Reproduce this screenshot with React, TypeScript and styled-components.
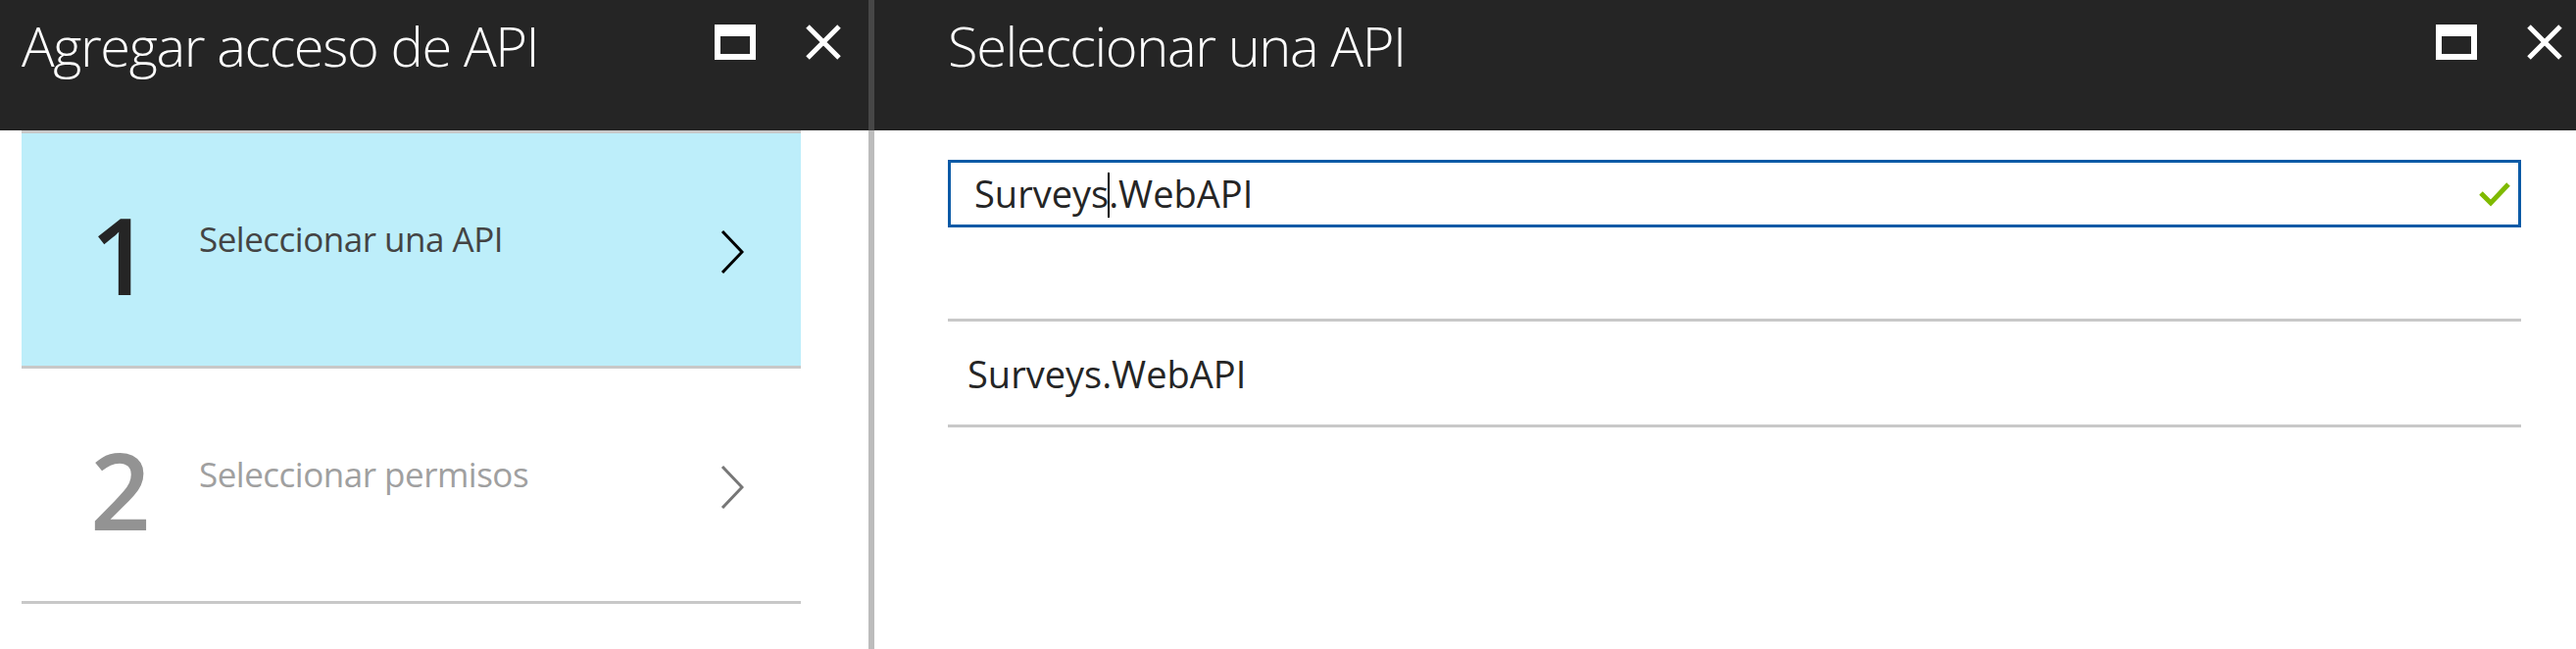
import React from "react"
import styled, { createGlobalStyle, css } from "styled-components"

const GlobalStyles = createGlobalStyle`
    *,
    *::before,
    *::after {
        margin: 0;
        padding: 0;
        box-sizing: border-box;
    }

    html, body, #root {
        height: 100%;
    }

    body {
        background-color: #ffffff;
        font-family: "Open Sans", "Noto Sans", sans-serif;
        overflow: hidden;
    }
`

const colors = {
    header: "#252525",
    dividerDark: "#474747",
    dividerLight: "#bcbcbc",
    rule: "#c8c8c8",
    selected: "#bdeefa",
    active: "#252525",
    inactive: "#939393",
    blue: "#0b5aa6",
    green: "#7fba00",
}

const Page = styled.div`
    display: flex;
    height: 662px;
    width: 2628px;
`

const Panel = styled.section<{ $width?: number }>`
    display: flex;
    flex-direction: column;
    ${props => props.$width ? css`width: ${props.$width}px;` : css`flex: 1;`}
`

const Header = styled.header<{ $divider?: boolean; $padLeft: number; $padRight: number }>`
    display: flex;
    align-items: flex-start;
    height: 133px;
    background-color: ${colors.header};
    padding: 14px ${props => props.$padRight}px 0 ${props => props.$padLeft}px;
    ${props => props.$divider && css`border-left: 6px solid ${colors.dividerDark};`}
`

const Title = styled.h1`
    flex: 1;
    color: #ffffff;
    font-family: "Open Sans", sans-serif;
    font-weight: 300;
    font-size: 56px;
    line-height: 64px;
    letter-spacing: -1.4px;
    white-space: nowrap;
`

const IconButton = styled.button`
    display: flex;
    align-items: center;
    justify-content: center;
    background: none;
    border: none;
    margin-top: 11px;
    height: 36px;
`

const Maximize = styled.span`
    display: block;
    width: 42px;
    height: 36px;
    border: 6px solid #ffffff;
    border-top-width: 12px;
`

const Body = styled.div<{ $divider?: boolean; $padLeft: number; $padRight: number }>`
    flex: 1;
    padding: 0 ${props => props.$padRight}px 0 ${props => props.$padLeft}px;
    ${props => props.$divider && css`border-left: 6px solid ${colors.dividerLight};`}
`

const StepList = styled.ul`
    list-style: none;
    border-top: 3px solid ${colors.rule};
`

const Step = styled.li<{ $selected?: boolean }>`
    display: flex;
    align-items: center;
    height: 240px;
    border-bottom: 3px solid ${colors.rule};
    background-color: ${props => props.$selected ? colors.selected : "transparent"};
    padding: 0 58px 0 0;
`

const StepNumber = styled.div<{ $active?: boolean }>`
    width: 181px;
    padding-left: 70px;
    margin-top: 10px;
    font-family: "Open Sans", sans-serif;
    font-size: 108px;
    line-height: 112px;
    font-weight: 600;
    color: ${props => props.$active ? colors.active : colors.inactive};
`

const StepLabel = styled.div<{ $active?: boolean }>`
    flex: 1;
    margin-top: -22px;
    font-family: "Open Sans", sans-serif;
    font-size: 35px;
    line-height: 44px;
    letter-spacing: -0.5px;
    color: ${props => props.$active ? "#444444" : "#a0a0a0"};
`

const Chevron = styled.svg`
    display: block;
    margin-top: 4px;
`

const SearchBox = styled.div`
    display: flex;
    align-items: center;
    margin-top: 30px;
    height: 69px;
    border: 3px solid ${colors.blue};
    padding: 0 8px 0 24px;
`

const SearchText = styled.div`
    flex: 1;
    font-family: "Open Sans", sans-serif;
    font-size: 38px;
    line-height: 48px;
    color: #252525;
    white-space: nowrap;
`

const Caret = styled.span`
    display: inline-block;
    width: 2px;
    height: 46px;
    margin: 0 -1px;
    vertical-align: -10px;
    background-color: #000000;
`

const Results = styled.ul`
    list-style: none;
    margin-top: 93px;
    border-top: 3px solid ${colors.rule};
`

const Result = styled.li`
    display: flex;
    align-items: center;
    height: 108px;
    padding-left: 20px;
    border-bottom: 3px solid ${colors.rule};
    font-family: "Open Sans", sans-serif;
    font-size: 38px;
    color: #252525;
`

const CloseIcon = () => (
    <svg width="36" height="36" viewBox="0 0 36 36">
        <path d="M2 2 L34 34 M34 2 L2 34" stroke="#ffffff" strokeWidth="5" fill="none" />
    </svg>
)

const HeaderIcons = styled.div`
    display: flex;
    gap: 51px;
    align-items: center;
`

const ChevronIcon = ({ color }: { color: string }) => (
    <Chevron width="24" height="44" viewBox="0 0 24 44">
        <polyline points="2,1 22,22 2,43" stroke={color} strokeWidth="3" fill="none" />
    </Chevron>
)

const steps = [
    { n: "1", label: "Seleccionar una API", active: true },
    { n: "2", label: "Seleccionar permisos", active: false },
]

export default function App() {
    return (
        <Page>
            <GlobalStyles />
            <Panel $width={886}>
                <Header $padLeft={22} $padRight={28}>
                    <Title>Agregar acceso de API</Title>
                    <HeaderIcons>
                        <IconButton><Maximize /></IconButton>
                        <IconButton><CloseIcon /></IconButton>
                    </HeaderIcons>
                </Header>
                <Body $padLeft={22} $padRight={69}>
                    <StepList>
                        {steps.map(s => (
                            <Step key={s.n} $selected={s.active}>
                                <StepNumber $active={s.active}>{s.n}</StepNumber>
                                <StepLabel $active={s.active}>{s.label}</StepLabel>
                                <ChevronIcon color={s.active ? "#000000" : "#777777"} />
                            </Step>
                        ))}
                    </StepList>
                </Body>
            </Panel>
            <Panel>
                <Header $divider $padLeft={75} $padRight={14}>
                    <Title>Seleccionar una API</Title>
                    <HeaderIcons>
                        <IconButton><Maximize /></IconButton>
                        <IconButton><CloseIcon /></IconButton>
                    </HeaderIcons>
                </Header>
                <Body $divider $padLeft={75} $padRight={56}>
                    <SearchBox>
                        <SearchText>Surveys<Caret />.WebAPI</SearchText>
                        <svg width="32" height="26" viewBox="0 0 32 26">
                            <polyline points="2,12 12,22 30,3" stroke={colors.green} strokeWidth="5" fill="none" />
                        </svg>
                    </SearchBox>
                    <Results>
                        <Result>Surveys.WebAPI</Result>
                    </Results>
                </Body>
            </Panel>
        </Page>
    )
}
